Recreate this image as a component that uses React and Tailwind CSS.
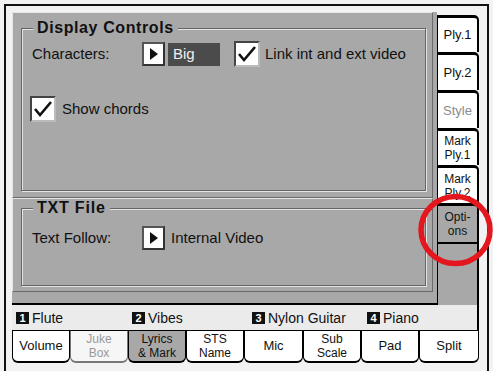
import React from "react";

const F = { fontFamily: '"Liberation Sans", Arial, sans-serif' };

function Arrow() {
  return (
    <div className="w-[23px] h-[24px] bg-white border-2 border-t-[#555] border-l-[#555] border-r-[#333] border-b-[#333] flex items-center justify-center shrink-0">
      <svg width="9" height="12" viewBox="0 0 9 12">
        <polygon points="1,0 9,6 1,12" fill="#111" />
      </svg>
    </div>
  );
}

function Check() {
  return (
    <div className="w-[26px] h-[26px] bg-white border-2 border-t-[#444] border-l-[#444] border-r-[#bbb] border-b-[#bbb] flex items-center justify-center shrink-0">
      <svg width="20" height="18" viewBox="0 0 20 18">
        <polyline points="2,9 7,15 18,2" fill="none" stroke="#111" strokeWidth="2.6" />
      </svg>
    </div>
  );
}

function SideTab({ children, h, muted, selected, two }) {
  return (
    <div
      className={`w-[42px] border-t-[3px] border-r-2 border-l border-black rounded-tr-[5px] flex items-center justify-center text-center ${
        two ? "text-[12px] leading-[14px]" : "text-[13px] leading-[14px]"
      } ${selected ? "bg-[#a8a8a8]" : "bg-white"} ${muted ? "text-[#8a8a8a]" : "text-[#111]"}`}
      style={{ height: h }}
    >
      {children}
    </div>
  );
}

function BottomTab({ children, muted, selected, w, two }) {
  return (
    <div
      className={`h-[32px] border-x border-b-2 rounded-b-[6px] flex items-center justify-center text-center ${
        two ? "text-[12px] leading-[14px]" : "text-[13px] leading-[14px]"
      } ${
        selected
          ? "bg-[#a8a8a8] border-black text-[#111]"
          : muted
          ? "bg-[#f6f6f6] border-[#777] text-[#999]"
          : "bg-white border-black text-[#111]"
      }`}
      style={{ width: w }}
    >
      {children}
    </div>
  );
}

function Track({ n, name, w }) {
  return (
    <div className="flex items-center gap-[3px]" style={{ width: w }}>
      <span className="w-[13px] h-[12px] bg-[#111] text-white text-[11px] leading-[12px] font-bold flex items-center justify-center">
        {n}
      </span>
      <span className="text-[14px] leading-[14px] text-[#111]">{name}</span>
    </div>
  );
}

export default function App() {
  return (
    <div className="relative w-[493px] h-[371px] bg-[#f2f2f2] overflow-hidden" style={F}>
      <div className="ml-[4px] mt-[4px] w-[485px] h-[380px] border-2 border-[#111] pl-[6px] pt-[6px]">
        <div className="w-[468px] flex flex-col">
          <div className="flex h-[293px]">
            {/* main gray panel */}
            <div className="w-[425px] bg-[#a8a8a8] border-b-2 border-black flex flex-col">
              <div className="h-[186px] border-t border-l border-[#e6e6e6] border-r border-r-[#6a6a6a] border-b border-b-[#6a6a6a] mr-[4px] pl-[8px] pt-[6px]">
                <fieldset className="w-[405px] h-[172px] border border-[#666] shadow-[1px_1px_0_#e4e4e4,inset_1px_1px_0_#e4e4e4] pl-[10px] pr-[6px]">
                  <legend className="ml-[1px] px-[4px] text-[16px] leading-[18px] font-bold tracking-[0.6px] text-[#111] bg-[#a8a8a8]">
                    Display Controls
                  </legend>
                  <div className="flex items-center mt-[4px] h-[26px]">
                    <span className="w-[110px] text-[15px] text-[#111]">Characters:</span>
                    <Arrow />
                    <div className="ml-[3px] w-[52px] h-[23px] bg-[#4b4b4b] text-[#f0f0f0] text-[15px] pl-[5px] flex items-center">
                      Big
                    </div>
                    <div className="ml-[14px]">
                      <Check />
                    </div>
                    <span className="ml-[5px] text-[15px] text-[#111]">Link int and ext video</span>
                  </div>
                  <div className="flex items-center mt-[29px] -ml-[2px]">
                    <Check />
                    <span className="ml-[6px] text-[15px] text-[#111]">Show chords</span>
                  </div>
                </fieldset>
              </div>
              <div className="h-[94px] border-t border-l border-[#e6e6e6] border-r border-r-[#6a6a6a] border-b border-b-[#6a6a6a] mr-[4px] pl-[8px] pt-[0px]">
                <fieldset className="w-[405px] h-[87px] border border-[#666] shadow-[1px_1px_0_#e4e4e4,inset_1px_1px_0_#e4e4e4] pl-[10px]">
                  <legend className="ml-[1px] px-[4px] text-[16px] leading-[18px] font-bold tracking-[0.8px] text-[#111] bg-[#a8a8a8]">
                    TXT File
                  </legend>
                  <div className="flex items-center mt-[8px] h-[26px]">
                    <span className="w-[110px] text-[15px] text-[#111]">Text Follow:</span>
                    <Arrow />
                    <span className="ml-[6px] text-[15px] text-[#111]">Internal Video</span>
                  </div>
                </fieldset>
              </div>
            </div>
            {/* side tabs */}
            <div className="w-[43px] flex flex-col pt-[3px]">
              <SideTab h={37}>Ply.1</SideTab>
              <SideTab h={38}>Ply.2</SideTab>
              <SideTab h={38} muted>Style</SideTab>
              <SideTab h={37} two>
                Mark
                <br />
                Ply.1
              </SideTab>
              <SideTab h={38} two>
                Mark
                <br />
                Ply.2
              </SideTab>
              <SideTab h={39} selected two>
                Opti-
                <br />
                ons
              </SideTab>
              <div className="w-[42px] flex-1 bg-[#a8a8a8] border-t-2 border-x-2 border-black border-l" />
            </div>
          </div>
          {/* track strip */}
          <div className="w-[467px] h-[25px] bg-[#ebebeb] border-r-2 border-black flex items-center pl-[4px]">
            <Track n="1" name="Flute" w={116} />
            <Track n="2" name="Vibes" w={120} />
            <Track n="3" name="Nylon Guitar" w={115} />
            <Track n="4" name="Piano" w={100} />
          </div>
          {/* bottom tabs */}
          <div className="flex w-[467px] border-t border-black">
            <BottomTab w={58}>Volume</BottomTab>
            <BottomTab w={58} muted two>
              Juke
              <br />
              Box
            </BottomTab>
            <BottomTab w={58} selected two>
              Lyrics
              <br />& Mark
            </BottomTab>
            <BottomTab w={58} two>
              STS
              <br />
              Name
            </BottomTab>
            <BottomTab w={59}>Mic</BottomTab>
            <BottomTab w={58} two>
              Sub
              <br />
              Scale
            </BottomTab>
            <BottomTab w={58}>Pad</BottomTab>
            <BottomTab w={60}>Split</BottomTab>
          </div>
        </div>
      </div>
      <svg className="absolute left-[417px] top-[192px]" width="78" height="78" viewBox="0 0 78 78">
        <ellipse cx="38.5" cy="38" rx="34.5" ry="33.5" fill="none" stroke="#e3171d" strokeWidth="5.5" />
      </svg>
    </div>
  );
}
